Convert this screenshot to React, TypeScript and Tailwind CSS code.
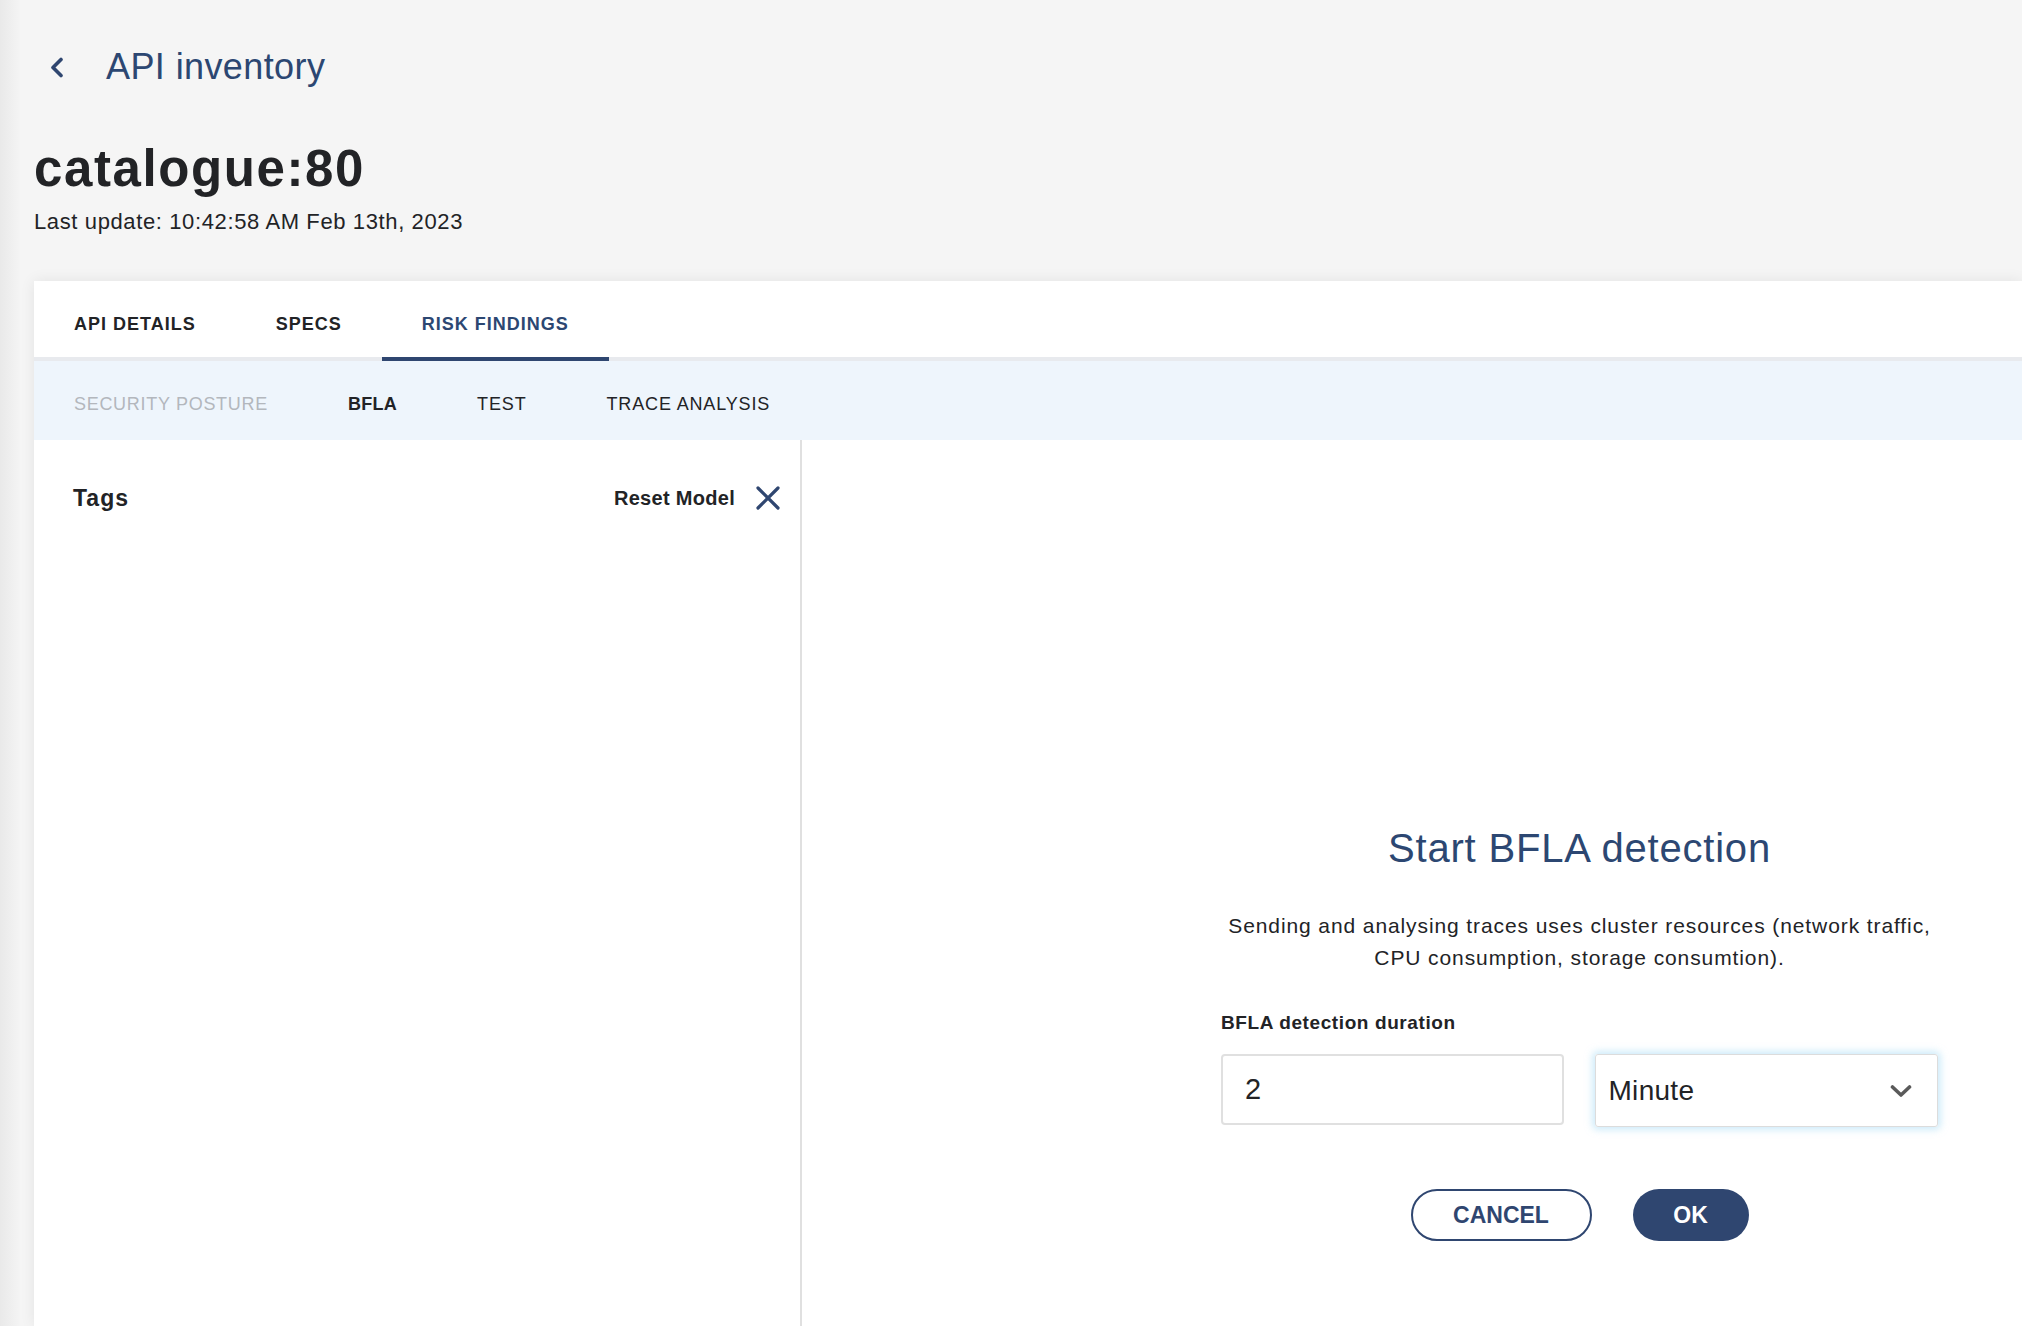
import { useState } from "react";

const NAVY = "#2f4670";

const TABS = ["API DETAILS", "SPECS", "RISK FINDINGS"];
const SUB_TABS = ["SECURITY POSTURE", "BFLA", "TEST", "TRACE ANALYSIS"];

function BackChevron() {
  return (
    <svg width="13" height="21" viewBox="0 0 13 21" fill="none">
      <polyline points="11,2.5 3,10.5 11,18.5" stroke={NAVY} strokeWidth="3.6" strokeLinecap="round" strokeLinejoin="round" />
    </svg>
  );
}

function CloseIcon() {
  return (
    <svg width="24" height="24" viewBox="0 0 24 24" fill="none">
      <path d="M2 2 L22 22 M22 2 L2 22" stroke={NAVY} strokeWidth="3.2" strokeLinecap="round" />
    </svg>
  );
}

function ChevronDown() {
  return (
    <svg width="22" height="14" viewBox="0 0 22 14" fill="none">
      <polyline points="2.5,3 11,11 19.5,3" stroke="#5a5a5a" strokeWidth="3.6" strokeLinecap="round" strokeLinejoin="round" />
    </svg>
  );
}

export default function App() {
  const [tab] = useState("RISK FINDINGS");
  const [subTab] = useState("BFLA");

  return (
    <div className="flex h-[1326px] w-full overflow-hidden bg-[#f5f5f5] font-['Liberation_Sans',Arial,sans-serif] text-[#222326]">
      {/* nav edge shadow */}
      <div className="w-5 shrink-0 bg-gradient-to-r from-[#e9e9e9] to-[#f4f4f4]" />

      <div className="flex min-w-0 flex-1 flex-col pl-[14px]">
        {/* Header */}
        <div className="mt-[45px] flex h-[44px] items-center">
          <div className="ml-4 flex">
            <BackChevron />
          </div>
          <span className="ml-[43px] text-[36px] leading-none tracking-[0.4px] text-[#2c4772]">API inventory</span>
        </div>
        <h1 className="mt-[54px] text-[51px] font-bold leading-none tracking-[1.6px]">catalogue:80</h1>
        <p className="mt-[14px] text-[22px] leading-[28px] tracking-[0.62px]">Last update: 10:42:58 AM Feb 13th, 2023</p>

        {/* Card */}
        <div className="mt-[45px] flex flex-1 flex-col bg-white shadow-[0_0_14px_rgba(0,0,0,0.08)]">
          <div className="flex h-[80px] border-b-4 border-[#e8eaee]">
            {TABS.map((t) => (
              <div
                key={t}
                className={
                  t === tab
                    ? "-mb-1 flex items-center border-b-4 border-[#2f4670] px-10 pt-[10px] text-[18px] font-bold tracking-[1px] text-[#2c4772]"
                    : "-mb-1 flex items-center border-b-4 border-transparent px-10 pt-[10px] text-[18px] font-bold tracking-[1px] text-[#222326]"
                }
              >
                {t}
              </div>
            ))}
          </div>

          <div className="flex h-[79px] bg-[#eef5fc]">
            {SUB_TABS.map((t, i) => (
              <div
                key={t}
                className={
                  t === subTab
                    ? "flex items-center px-10 pt-[7px] text-[18px] font-bold tracking-[0.3px] text-[#222326]"
                    : i === 0
                      ? "flex items-center px-10 pt-[7px] text-[18px] tracking-[0.7px] text-[#b3b7bd]"
                      : "flex items-center px-10 pt-[7px] text-[18px] tracking-[0.85px] text-[#222326]"
                }
              >
                {t}
              </div>
            ))}
          </div>

          <div className="flex flex-1">
            {/* Tags panel */}
            <div className="w-[768px] shrink-0 border-r-2 border-[#e0e0e0]">
              <div className="mt-[30px] flex h-[56px] items-center justify-between pl-[39px] pr-5">
                <span className="text-[23px] font-bold tracking-[1px]">Tags</span>
                <div className="flex items-center gap-[21px]">
                  <span className="text-[20px] font-bold tracking-[0.3px]">Reset Model</span>
                  <CloseIcon />
                </div>
              </div>
            </div>

            {/* BFLA start */}
            <div className="flex-1 pl-[419px]">
              <div className="flex w-[717px] flex-col">
                <h2 className="mt-[384px] text-center text-[40px] leading-[48px] tracking-[0.8px] text-[#2c4772]">
                  Start BFLA detection
                </h2>
                <p className="mt-[38px] text-center text-[21px] leading-[32px] tracking-[0.9px]">
                  Sending and analysing traces uses cluster resources (network traffic,
                  <br />
                  CPU consumption, storage consumtion).
                </p>
                <label className="mt-[37px] text-[19px] font-bold leading-[24px] tracking-[0.6px]">BFLA detection duration</label>
                <div className="mt-[19px] flex items-start gap-[31px]">
                  <div className="flex h-[71px] w-[344px] items-center rounded-[4px] border-2 border-[#e0e0e0] pl-[22px] text-[29px]">
                    2
                  </div>
                  <div className="flex h-[73px] w-[343px] items-center justify-between rounded-[3px] border border-[#dcdcdc] pl-[12px] pr-[25px] text-[28px] tracking-[0.3px] shadow-[0_0_7px_3px_rgba(170,220,245,0.55)]">
                    <span>Minute</span>
                    <ChevronDown />
                  </div>
                </div>
                <div className="mt-[62px] flex justify-center gap-[41px]">
                  <button className="flex h-[52px] w-[181px] items-center justify-center rounded-full border-2 border-[#2f4670] text-[23px] font-bold text-[#2f4670]">
                    CANCEL
                  </button>
                  <button className="flex h-[52px] w-[116px] items-center justify-center rounded-full bg-[#2f4670] text-[23px] font-bold text-white">
                    OK
                  </button>
                </div>
              </div>
            </div>
          </div>
        </div>
      </div>
    </div>
  );
}
